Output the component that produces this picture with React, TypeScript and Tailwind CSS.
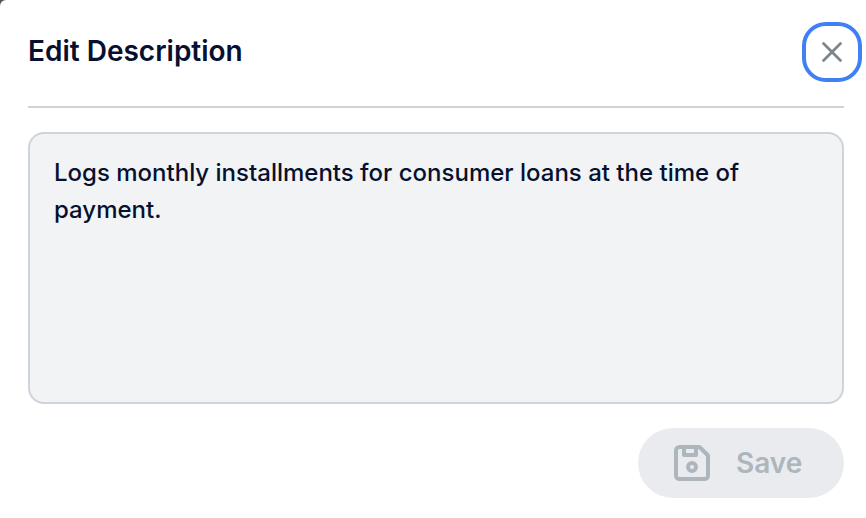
import { FC, useState } from 'react';

const CloseIcon: FC = () => (
  <svg
    className="h-5 w-5"
    viewBox="0 0 20 20"
    fill="none"
    stroke="currentColor"
    strokeWidth="2.6"
    strokeLinecap="round"
  >
    <path d="M1.5 1.5L18.5 18.5M18.5 1.5L1.5 18.5" />
  </svg>
);

const SaveIcon: FC = () => (
  <svg
    className="h-9 w-9"
    viewBox="0 0 36 36"
    fill="none"
    stroke="currentColor"
    strokeWidth="4"
    strokeLinejoin="round"
  >
    <path d="M5.5 2H25.5L34 10.5V30.5A3.5 3.5 0 0 1 30.5 34H5.5A3.5 3.5 0 0 1 2 30.5V5.5A3.5 3.5 0 0 1 5.5 2Z" />
    <path d="M10 2V10H22V2" />
    <circle cx="18" cy="22" r="4" />
  </svg>
);

const EditDescriptionDialog: FC = () => {
  const [description, setDescription] = useState(
    'Logs monthly installments for consumer loans at the time of payment.'
  );

  return (
    <div className="h-[518px] w-[866px] bg-[#555555] font-['Inter',sans-serif]">
      <div
        role="dialog"
        aria-labelledby="dialog-title"
        className="flex h-full flex-col rounded-tl-[6px] bg-white pl-7 pr-[22px] pt-[22px] text-[#07102f]"
      >
        <div className="flex h-[86px] items-start justify-between border-b-2 border-[#ced4da]">
          <h2
            id="dialog-title"
            className="pt-[9px] text-[28px] font-semibold leading-10"
          >
            Edit Description
          </h2>
          <button
            type="button"
            aria-label="Close"
            className="-mr-[18px] flex h-[60px] w-[60px] items-center justify-center rounded-3xl border-4 border-[#4080f5] text-[#7c848a]"
          >
            <CloseIcon />
          </button>
        </div>

        <textarea
          aria-label="Description"
          value={description}
          onChange={e => setDescription(e.target.value)}
          className="mt-6 h-[272px] w-full resize-none rounded-2xl border-2 border-[#ced4da] bg-[#f1f3f5] px-6 py-5 text-2xl font-medium leading-[37px] outline-none"
        />

        <div className="mt-6 flex justify-end">
          <button
            type="button"
            disabled
            className="flex h-[70px] w-[206px] items-center gap-[26px] rounded-full bg-[#eaebef] pl-9 text-[28px] font-semibold text-[#adb5bd]"
          >
            <SaveIcon />
            Save
          </button>
        </div>
      </div>
    </div>
  );
};

export default EditDescriptionDialog;
